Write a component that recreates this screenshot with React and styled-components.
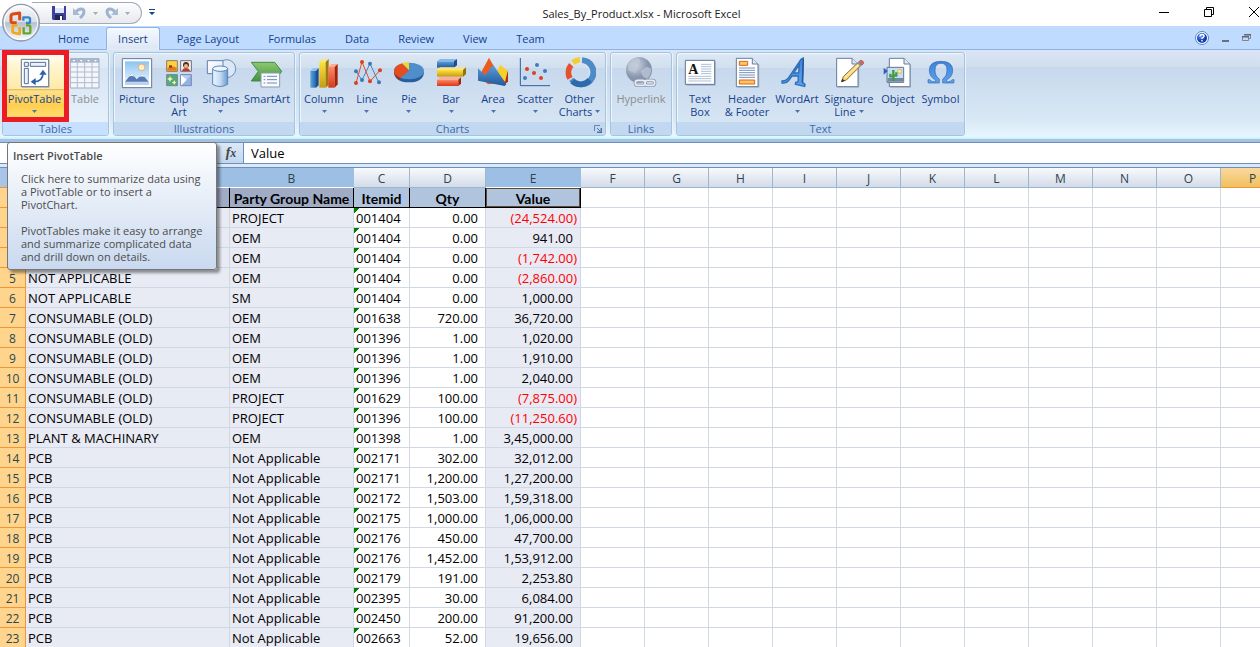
import React from "react";
import styled, { createGlobalStyle, css } from "styled-components";

const Global = createGlobalStyle`
  * { box-sizing: border-box; }
  body { margin: 0; background: #fff; overflow: hidden; }
  button, input { font: inherit; color: inherit; margin: 0; padding: 0; border: 0; background: none; }
  svg { display: block; flex: none; }
`;

const Window = styled.div`
  position: relative;
  height: 100vh;
  display: flex;
  flex-direction: column;
  overflow: hidden;
  font-family: "Open Sans", "Noto Sans", sans-serif;
  font-size: 11px;
  line-height: 13px;
  color: #15428b;
`;

/* ---------- title bar ---------- */
const TitleBar = styled.header`
  flex: none;
  display: flex;
  height: 26px;
  background: #fff;
  padding-left: 32px;
`;
const OfficeButton = styled.button`
  position: absolute;
  left: 1px;
  top: 2px;
  width: 40px;
  height: 40px;
  z-index: 2;
`;
const QuickAccess = styled.div`
  display: flex;
  align-items: center;
  width: 110px;
  height: 22px;
  margin-top: 2px;
  padding-left: 20px;
  gap: 7px;
  border: 1px solid #a5abb5;
  border-left: 0;
  border-radius: 0 12px 12px 0;
  background: linear-gradient(#fdfdfe, #e6e9ee);
`;
const IconButton = styled.button`
  display: flex;
  align-items: center;
  justify-content: center;
`;
const Customize = styled(IconButton)`
  width: 20px;
  height: 24px;
`;
const Title = styled.h1`
  flex: 1;
  margin: 0;
  padding-right: 20px;
  text-align: center;
  font-size: 11px;
  font-weight: 400;
  line-height: 27px;
  color: #1a1a1a;
`;
const WindowControls = styled.div`
  display: flex;
  width: 119px;
  overflow: hidden;
`;
const ControlButton = styled(IconButton)`
  flex: none;
  width: 45px;
  height: 24px;
`;

/* ---------- tabs ---------- */
const TabBar = styled.nav`
  flex: none;
  display: flex;
  align-items: flex-end;
  gap: 5px;
  height: 24px;
  padding-left: 46px;
  background: #bfdbff;
  border-bottom: 1px solid #8db2e3;
`;
const Tab = styled.button`
  height: 22px;
  padding: 0 11px;
  font-size: 11px;
  border: 1px solid transparent;
  border-bottom: 0;
  border-radius: 3px 3px 0 0;
  ${(p) => p.$active && css`
    height: 23px;
    margin-bottom: -1px;
    padding-bottom: 2px;
    background: linear-gradient(#f5f9ff, #dbe6f4);
    border-color: #8db2e3;
    box-shadow: 0 0 2px #fff inset;
  `}
`;
const TabTools = styled.div`
  display: flex;
  align-items: center;
  gap: 13px;
  height: 23px;
  margin-left: auto;
  padding-right: 9px;
`;

/* ---------- ribbon ---------- */
const Ribbon = styled.section`
  flex: none;
  display: flex;
  gap: 4px;
  height: 89px;
  padding: 2px 2px 3px;
  background: linear-gradient(#dbe6f4 0, #cfdded 17px, #c7d8ed 17px, #d8e8f5 70px, #e7f6ff 87px, #c0f7fe 88px);
`;
const Group = styled.div`
  display: flex;
  flex-direction: column;
  border: 1px solid #a5c4e0;
  border-radius: 3px;
  box-shadow: 1px 1px 0 #eef6fd inset, 1px 0 0 #eaf3fc;
  background: ${(p) => (p.$hot ? "linear-gradient(#e6effa 0, #dde9f6 15px, #d6e4f4 15px, #eaf4fd)" : "linear-gradient(#dee8f5 0, #d1dfee 15px, #c7d8ed 15px, #d9e8f5)")};
`;
const GroupBody = styled.div`
  flex: 1;
  display: flex;
  padding: 2px;
`;
const GroupLabel = styled.div`
  display: grid;
  grid-template-columns: 14px 1fr 14px;
  align-items: center;
  height: 14px;
  text-align: center;
  line-height: 13px;
  color: #3e6aaa;
  background: ${(p) => (p.$hot ? "#c8e0ff" : "#c2d8f1")};
  border-radius: 0 0 3px 3px;
`;
const LabelText = styled.span`
  grid-column: 2;
`;
const Tool = styled.button`
  display: flex;
  flex-direction: column;
  align-items: center;
  gap: 3px;
  width: ${(p) => p.$w}px;
  height: 65px;
  padding-top: 2px;
  white-space: nowrap;
  line-height: 13px;
  color: ${(p) => (p.disabled ? "#8d8d8d" : "#15428b")};
  ${(p) => p.$hot && css`
    border-radius: 3px;
    background: linear-gradient(#fffdf0 0, #fff3c9 14px, #ffe9a5 34px, #d9b566 34px, #ffe08a 36px, #ffcf4d 50px, #ffe07c 65px);
  `}
`;
const ToolText = styled.span`
  display: flex;
  flex-direction: column;
  align-items: center;
`;
const Line = styled.span`
  display: flex;
  align-items: center;
  gap: 3px;
  height: 13px;
`;
const Highlight = styled.div`
  position: absolute;
  left: 2px;
  top: 50px;
  width: 67px;
  height: 72px;
  border: 5px solid #ed1c24;
  pointer-events: none;
`;

/* ---------- formula bar ---------- */
const FormulaBar = styled.div`
  flex: none;
  display: flex;
  height: 29px;
  border-top: 3px solid #a9c1e0;
  border-bottom: 4px solid #dce8f7;
  background: #fff;
`;
const NameBox = styled.input`
  width: 216px;
  height: 22px;
  padding-left: 6px;
  border: solid #6b90bd;
  border-width: 1px 0;
`;
const FxButton = styled.button`
  width: 28px;
  height: 22px;
  padding-left: 3px;
  border: 1px solid #6b90bd;
  border-left: 0;
  background: linear-gradient(#dce8f7, #c3d6ee);
  font: italic bold 14px/18px "Liberation Serif", serif;
  color: #444;
  small { font-size: 12px; }
`;
const FormulaInput = styled.input`
  flex: 1;
  min-width: 0;
  height: 22px;
  padding-left: 7px;
  border: solid #6b90bd;
  border-width: 1px 0;
  font-size: 13px;
  color: #000;
`;

/* ---------- sheet ---------- */
const SheetArea = styled.main`
  flex: 1;
  min-height: 0;
  overflow: hidden;
  border-top: 1px solid #6b90bd;
  margin-top: -1px;
`;
const Sheet = styled.table`
  width: 1285px;
  table-layout: fixed;
  border-collapse: separate;
  border-spacing: 0;
  font-size: 13px;
  line-height: 17px;
  color: #000;
  th, td { height: 20px; padding: 2px 0 0; white-space: nowrap; overflow: hidden; }
`;
const colTones = {
  plain: css`background: linear-gradient(#f8fafc, #d3dbe9); border-color: #9eb6ce;`,
  selected: css`background: #9ebfe4; border-color: #9ebfe4; border-bottom-color: #fff;`,
  current: css`background: linear-gradient(#f9d99f, #f1c05f); border-color: #f29536;`,
};
const ColHead = styled.th`
  font-size: 12px;
  font-weight: 400;
  color: #2b454f;
  border: 0 solid;
  border-right-width: 1px;
  border-bottom-width: 1px;
  ${(p) => colTones[p.$tone]}
`;
const Corner = styled.th`
  background: #a9c4e9;
  border-right: 1px solid #9eb6ce;
  border-bottom: 1px solid #f29536;
`;
const RowHead = styled.th`
  font-size: 12px;
  font-weight: 400;
  text-align: center;
  color: #2b454f;
  background: #ffd58d;
  border-right: 1px solid #f29536;
  border-bottom: 1px solid #f29536;
`;
const Cell = styled.td`
  border-right: 1px solid #d0d7e5;
  border-bottom: 1px solid #d0d7e5;
  text-align: ${(p) => (p.$num ? "right" : "left")};
  color: ${(p) => (p.$neg ? "#f00" : "#000")};
  background: ${(p) => (p.$sel ? "#e8eaf4" : p.$flag ? "linear-gradient(135deg, #008000 4px, #fff 4px)" : "#fff")};
  && { padding: 2px ${(p) => (p.$neg ? 3 : p.$num ? 7 : 0)}px 0 2px; }
`;
const FieldName = styled.th`
  font-family: Lato, sans-serif;
  font-size: 14px;
  font-weight: 700;
  text-align: center;
  border-right: 1px solid #000;
  border-bottom: 1px solid #000;
  background: ${(p) => (p.$sel ? "#a0abc6" : "#b0c4de")};
  ${(p) => p.$active && css`box-shadow: 0 0 0 1px #5b4a3a inset;`}
`;

/* ---------- tooltip ---------- */
const Tip = styled.aside`
  position: absolute;
  left: 7px;
  top: 142px;
  width: 210px;
  padding: 6px 5px;
  border: 1px solid #767676;
  border-radius: 3px;
  background: linear-gradient(#fff, #c9d9ef);
  box-shadow: 3px 3px 3px rgba(0, 0, 0, 0.4);
  color: #4c4c4c;
`;
const TipTitle = styled.h2`
  margin: 0 0 10px;
  font-size: 11px;
  line-height: 13px;
  font-weight: 600;
`;
const TipText = styled.p`
  margin: 0 0 13px;
  padding-left: 8px;
  white-space: pre-line;
  &:last-child { margin: 0; }
`;

/* ---------- drawings ---------- */
const Caret = ({ color = "#4f74ad" }) => (
  <svg width="5" height="3" viewBox="0 0 5 3"><path d="M0 0h5L2.5 3z" fill={color} /></svg>
);

const Defs = () => (
  <svg width="0" height="0" style={{ position: "absolute" }} aria-hidden="true">
    <defs>
      <linearGradient id="blue"><stop offset="0" stopColor="#5fa6df" /><stop offset="1" stopColor="#2464a8" /></linearGradient>
      <linearGradient id="blueV" x2="0" y2="1"><stop offset="0" stopColor="#5b9edb" /><stop offset="1" stopColor="#23589b" /></linearGradient>
      <linearGradient id="letter" x2="0" y2="1"><stop offset="0" stopColor="#3f83d8" /><stop offset="1" stopColor="#5ba3ec" /></linearGradient>
      <linearGradient id="gold" x2="0" y2="1"><stop offset="0" stopColor="#ffe23c" /><stop offset="1" stopColor="#c69a12" /></linearGradient>
      <linearGradient id="red" x2="0" y2="1"><stop offset="0" stopColor="#ff8a66" /><stop offset="1" stopColor="#d93616" /></linearGradient>
      <linearGradient id="paper" x2="1" y2="1"><stop offset="0" stopColor="#fff" /><stop offset="1" stopColor="#dfe8f5" /></linearGradient>
      <linearGradient id="green" x2="0" y2="1"><stop offset="0" stopColor="#8fc871" /><stop offset="1" stopColor="#3f9440" /></linearGradient>
      <linearGradient id="cyl"><stop offset="0" stopColor="#eef5fd" /><stop offset="0.5" stopColor="#c5dbf3" /><stop offset="1" stopColor="#6c99ce" /></linearGradient>
      <linearGradient id="sky" x2="0" y2="1"><stop offset="0" stopColor="#8cc4f3" /><stop offset="1" stopColor="#e4f3fe" /></linearGradient>
      <radialGradient id="grey" cx="0.35" cy="0.3"><stop offset="0" stopColor="#d3dae5" /><stop offset="1" stopColor="#8694ad" /></radialGradient>
      <radialGradient id="help" cx="0.4" cy="0.3"><stop offset="0" stopColor="#69a0f5" /><stop offset="1" stopColor="#0b3bb5" /></radialGradient>
      <linearGradient id="orb" x2="0" y2="1"><stop offset="0" stopColor="#fbfcfe" /><stop offset="0.48" stopColor="#d9dfe8" /><stop offset="0.5" stopColor="#b4c0d2" /><stop offset="1" stopColor="#fbfdff" /></linearGradient>
    </defs>
  </svg>
);

const Art = ({ x, y = 36, children }) => (
  <svg width="32" height="32" viewBox={`${x} ${y} 96 96`} aria-hidden="true">{children}</svg>
);

const icons = {
  pivot: (
    <Art x={54} y={168}>
      <path d="M63 177h83v84H63z" fill="#8b9bb0" opacity=".4" />
      <path d="M61 175h82v82H61z" fill="#fff" stroke="#5d7697" strokeWidth="3" />
      <path d="M70 184h12v12H70zM88 184h46v12H88zM70 202h12v46H70z" fill="#eaf1fa" stroke="#54709a" strokeWidth="3" />
      <path d="M98 242c18 0 28-10 28-27" fill="none" stroke="#2f5fa6" strokeWidth="5" />
      <path d="M126 206l11 15h-22zM89 242l15-11v22z" fill="#2f5fa6" />
    </Art>
  ),
  table: (
    <Art x={207} y={168}>
      <path d="M211 173h86v88h-86z" fill="#f3f6fa" stroke="#9fadc3" strokeWidth="3" />
      <path d="M211 173h86v12h-86z" fill="#a5b3c7" />
      <path d="M211 198h86M211 213h86M211 229h86M211 245h86M232 173v88M254 173v88M276 173v88" stroke="#b0bdd0" strokeWidth="3" />
      <path d="M217 177h9l-4 5zM239 177h9l-4 5zM261 177h9l-4 5zM282 177h9l-4 5z" fill="#fff" />
    </Art>
  ),
  picture: (
    <Art x={363} y={168}>
      <path d="M367 173h88v87h-88z" fill="#fff" stroke="#60779a" strokeWidth="3" />
      <path d="M375 181h72v64h-72z" fill="url(#sky)" />
      <circle cx="425" cy="199" r="10" fill="#fff0d0" stroke="#f1a95e" strokeWidth="3" />
      <path d="M375 243l20-26 15 18 17-15 20 24z" fill="#5479b3" />
      <path d="M387 227l8-10 8 10-8-3zM418 228l9-8 8 9-8-3z" fill="#fff" />
      <path d="M375 242h72v10h-72z" fill="#bcd2ed" />
    </Art>
  ),
  clip: (
    <Art x={489} y={168}>
      <path d="M500 179h32v32h-32z" fill="#ffd23d" stroke="#8c7b66" strokeWidth="3" />
      <path d="M502 201l16-5 12 4v9h-28z" fill="#e47a18" /><path d="M507 193h9v7h-9z" fill="#8b3b14" />
      <path d="M542 179h32v32h-32z" fill="#f4f1ef" stroke="#6f6f78" strokeWidth="3" />
      <circle cx="558" cy="192" r="9" fill="#4e2c22" /><circle cx="558" cy="195" r="6" fill="#efb48c" /><path d="M546 210q2-9 12-9t12 9z" fill="#c13c2b" />
      <path d="M500 221h32v33h-32z" fill="#54a883" stroke="#6b8b80" strokeWidth="3" />
      <path d="M510 225l3 6 6 3-6 3-3 6-3-6-6-3 6-3zM523 237l2 5 5 3-5 2-2 5-3-5-5-2 5-3z" fill="#f7f3a0" />
      <path d="M542 221h32v33h-32z" fill="#b9cdf2" stroke="#7386ad" strokeWidth="3" />
      <path d="M543 222l19 16-19 15z" fill="#fff" /><path d="M573 222v31h-28z" fill="#7c9de0" opacity=".6" />
    </Art>
  ),
  shapes: (
    <Art x={615} y={168}>
      <circle cx="680" cy="203" r="27" fill="#dce8f6" stroke="#6d8fbd" strokeWidth="3" />
      <path d="M622 179h47v39h-47z" fill="url(#paper)" stroke="#5d80b0" strokeWidth="3" />
      <path d="M638 203v47q22 13 45 0v-47z" fill="url(#cyl)" stroke="#5c85ba" strokeWidth="3" />
      <ellipse cx="660.500" cy="203" rx="22.500" ry="8" fill="#edf5fd" stroke="#5c85ba" strokeWidth="3" />
    </Art>
  ),
  smart: (
    <Art x={753} y={168}>
      <path d="M754 184h70l21 27-21 29h-70l21-29z" fill="url(#green)" stroke="#458747" strokeWidth="3" />
      <path d="M783 216h56v42h-56z" fill="#f8fafd" stroke="#8b9ab0" strokeWidth="3" />
      <path d="M791 226h5M801 226h30M791 236h5M801 236h30M791 246h5M801 246h30" stroke="#7088b0" strokeWidth="3" />
    </Art>
  ),
  column: (
    <Art x={57}>
      <path d="M64 78h17v50H64z" fill="url(#blue)" /><path d="M64 78l8-9h17l-8 9z" fill="#8dc3ec" /><path d="M81 78l8-9v52l-8 7z" fill="#1c4f8b" />
      <path d="M91 51h19v77H91z" fill="url(#gold)" /><path d="M91 51l9-9h19l-9 9z" fill="#f8e483" /><path d="M110 51l9-9v77l-9 9z" fill="#9a7b0b" />
      <path d="M118 66h19v62h-19z" fill="url(#red)" /><path d="M118 66l9-9h19l-9 9z" fill="#ffab90" /><path d="M137 66l9-9v61l-9 10z" fill="#a62105" />
    </Art>
  ),
  line: (
    <Art x={186}>
      <path d="M201 79l18 26 24-49 26 56" fill="none" stroke="#4983bd" strokeWidth="3" />
      <path d="M201 114l18-63 24 58 30-33" fill="none" stroke="#d8502f" strokeWidth="3" />
      <g fill="#3c78b5"><circle cx="201" cy="79" r="6" /><circle cx="219" cy="105" r="6" /><circle cx="243" cy="56" r="6" /><circle cx="270" cy="112" r="6" /></g>
      <g fill="#d9421d"><circle cx="201" cy="114" r="6" /><circle cx="219" cy="51" r="6" /><circle cx="243" cy="109" r="6" /><circle cx="273" cy="76" r="6" /></g>
    </Art>
  ),
  pie: (
    <Art x={312}>
      <path d="M315 80q0 31 45 32 45-1 45-32z" fill="#285e9f" />
      <ellipse cx="360" cy="78" rx="45" ry="25" fill="#4d8ecb" />
      <path d="M360 78l-27 21q-18-8-18-21 0-15 24-23z" fill="#e34d20" /><path d="M315 79q0 17 19 27v-7q-17-8-19-20z" fill="#a62c0b" />
      <path d="M360 75l-21-20q10-3 21-3z" fill="#f8d32c" />
    </Art>
  ),
  bar: (
    <Art x={438}>
      <path d="M444 49h51v19h-51z" fill="url(#blueV)" /><path d="M444 49l9-7h51l-9 7z" fill="#86b9e5" /><path d="M495 49l9-7v19l-9 7z" fill="#1c4f8b" />
      <path d="M444 75h78v20h-78z" fill="url(#gold)" /><path d="M444 75l9-8h78l-9 8z" fill="#f8e483" /><path d="M522 75l9-8v20l-9 8z" fill="#8e720c" />
      <path d="M444 104h64v19h-64z" fill="url(#red)" /><path d="M444 104l9-7h63l-8 7z" fill="#ffab90" /><path d="M508 104l8-7v19l-8 7z" fill="#a62105" />
    </Art>
  ),
  area: (
    <Art x={564}>
      <path d="M571 92l29-54 34 60 23-20v34l-60 6z" fill="#ea5c20" /><path d="M657 76v33l-12 12z" fill="#a93210" />
      <path d="M622 80l12-20 22 17-8 33z" fill="#f6cf2c" />
      <path d="M567 70l21 21 25-31 39 58-5 5-80-16z" fill="url(#blueV)" />
    </Art>
  ),
  scatter: (
    <Art x={690}>
      <path d="M694 39v83h89" fill="none" stroke="#315f9b" strokeWidth="3" />
      <g fill="#3f7cba"><circle cx="744" cy="60" r="6" /><circle cx="768" cy="78" r="6" /><circle cx="708" cy="99" r="6" /></g>
      <g fill="#d9421d"><circle cx="714" cy="72" r="6" /><circle cx="735" cy="84" r="6" /><circle cx="756" cy="99" r="6" /></g>
    </Art>
  ),
  other: (
    <Art x={822}>
      <g fill="none" strokeWidth="18">
        <path d="M876 46a36 36 0 1 1-31 57" stroke="#4d8bc6" /><path d="M899 105a36 36 0 0 1-52 3" stroke="#2f6bac" />
        <path d="M840 100a36 36 0 0 1 4-40" stroke="#e2522c" /><path d="M849 53a36 36 0 0 1 21-8" stroke="#f0ce38" />
      </g>
      <circle cx="872" cy="81" r="27" fill="none" stroke="#eef3fa" strokeWidth="2" opacity=".7" />
    </Art>
  ),
  link: (
    <Art x={60}>
      <circle cx="102" cy="75" r="39" fill="url(#grey)" />
      <path d="M70 56q12-17 30-17l7 11-15 12 8 9-10 14-20-9zM107 78l19-13 12 6q1 18-12 31l-13-8z" fill="#bdc7d6" opacity=".75" />
      <g fill="none" stroke="#8b98ae" strokeWidth="10"><rect x="91" y="106" width="29" height="15" rx="7" /><rect x="120" y="106" width="29" height="15" rx="7" /></g>
      <g fill="none" stroke="#e8edf4" strokeWidth="5"><rect x="91" y="106" width="29" height="15" rx="7" /><rect x="120" y="106" width="29" height="15" rx="7" /></g>
    </Art>
  ),
  textbox: (
    <Art x={237}>
      <path d="M244 49h88v73h-88z" fill="#7d8ba1" opacity=".5" /><path d="M241 46h88v72h-88z" fill="#fff" stroke="#5f7593" strokeWidth="3" />
      <text x="250" y="88" fontFamily="Liberation Serif, serif" fontWeight="700" fontSize="42" fill="#111">A</text>
      <path d="M288 58h31M288 65h31M288 72h31M288 79h31M288 86h31M250 94h69M250 101h69M250 108h69" stroke="#9eb1cf" strokeWidth="2.500" />
    </Art>
  ),
  header: (
    <Art x={378}>
      <path d="M397 43h49l17 18v67h-66z" fill="#7d8ba1" opacity=".4" /><path d="M394 40h48l17 17v68h-65z" fill="#fff" stroke="#667c9d" strokeWidth="3" /><path d="M442 40v17h17" fill="#dfe7f2" stroke="#667c9d" strokeWidth="3" />
      <path d="M403 49h25v12h-25z" fill="#ffc36b" stroke="#d2690f" strokeWidth="3" /><path d="M403 105h46v12h-46z" fill="#ffc36b" stroke="#d2690f" strokeWidth="3" />
      <path d="M402 69h48M402 76h48M402 83h48M402 90h48M402 97h48" stroke="#7791bd" strokeWidth="3" />
    </Art>
  ),
  wordart: (
    <Art x={528}>
      <path d="M531 108q13 1 22-13l35-52 7-4-2 74 7 5-1 6-28-6 1-6 7-1 1-18h-19l-10 14q-6 9-20 7zM566 84h15l2-25z" fill="url(#letter)" stroke="#2e6eb8" strokeWidth="4" />
      <path d="M595 43l-3 70" stroke="#23559c" strokeWidth="4" fill="none" />
    </Art>
  ),
  sign: (
    <Art x={684}>
      <path d="M697 43h46l20 18v67h-66z" fill="#7d8ba1" opacity=".4" /><path d="M695 40h46l18 17v68h-64z" fill="#fff" stroke="#667c9d" strokeWidth="3" /><path d="M741 40v17h18" fill="#dfe7f2" stroke="#667c9d" strokeWidth="3" />
      <path d="M710 110l5-15 45-43 8 9-44 44z" fill="#ffd979" stroke="#7d6a3c" strokeWidth="3" /><path d="M720 97l42-40" stroke="#fff2c0" strokeWidth="3" />
      <path d="M762 50l5-4q8 0 9 9l-5 5z" fill="#d86a5e" stroke="#8a4537" strokeWidth="2" /><path d="M758 53l10 10" stroke="#8395aa" strokeWidth="5" /><path d="M708 112l4-11 8 6z" fill="#333" />
    </Art>
  ),
  object: (
    <Art x={828}>
      <path d="M853 43h44l18 18v67h-62z" fill="#7d8ba1" opacity=".4" /><path d="M850 40h44l18 17v68h-62z" fill="#fff" stroke="#667c9d" strokeWidth="3" /><path d="M894 40v17h18" fill="#dfe7f2" stroke="#667c9d" strokeWidth="3" />
      <path d="M843 67h50v45h-50z" fill="#c6def4" stroke="#60758f" strokeWidth="3" /><path d="M845 99h47v11h-47z" fill="#718aa2" />
      <circle cx="881" cy="79" r="6" fill="#ffe9a0" stroke="#d6aa3d" strokeWidth="2" />
      <path d="M862 108V75M853 86v8h9M871 82v10h-8" fill="none" stroke="#459a48" strokeWidth="7" /><path d="M833 68l12 10-12 11z" fill="#255fc0" />
    </Art>
  ),
  symbol: (
    <Art x={957}>
      <path d="M966 113v-9h5q4 6 12 6h6v-5q-19-9-19-29 0-27 35-27t35 27q0 20-19 29v5h6q8 0 12-6h5v9l-2 1h-32v-12q13-8 13-27 0-20-18-20t-18 20q0 19 13 27v12h-32z" fill="url(#letter)" stroke="#3168b5" strokeWidth="2" />
    </Art>
  ),
};

const OfficeOrb = () => (
  <svg width="40" height="40" viewBox="0 0 120 120" aria-hidden="true">
    <circle cx="60" cy="62" r="55" fill="url(#orb)" stroke="#8f98a6" strokeWidth="4" />
    <circle cx="60" cy="62" r="50" fill="none" stroke="#fff" strokeWidth="3" />
    <g fill="none" strokeWidth="9" strokeLinejoin="round">
      <path d="M50 51v-7h-10q-3 0-3 4v10q0 3 4 3h9M50 32h9v24" stroke="none" />
      <path d="M56 55V33l-20 3q-6 1-6 7v14q0 5 5 5h12" stroke="#df4a13" />
      <path d="M67 56V46h14q6 0 6 5v8q0 4-4 4h-8" stroke="#3387c9" strokeWidth="7" />
      <path d="M49 70H40q-5 0-5 5v12q0 6 6 6l15 3V75" stroke="#f2a81a" strokeWidth="8" />
      <path d="M75 70h8q5 0 5 5v15q0 4-4 4H68V76" stroke="#69a52b" strokeWidth="7" />
    </g>
  </svg>
);
const SaveIcon = () => (
  <svg width="14" height="14" viewBox="0 0 14 14"><path d="M0 0h14v14H1l-1-1z" fill="#3f3f9f" /><path d="M3 0h9v7H3z" fill="#dce7fb" /><path d="M3 0h9v2H3z" fill="#fff" /><path d="M3 9h8v5H3z" fill="#20264f" /><path d="M8 10h2v4H8z" fill="#fff" /></svg>
);
const UndoIcon = ({ flip }) => (
  <svg width="13" height="12" viewBox="0 0 13 12"><g transform={flip ? "translate(13 0) scale(-1 1)" : undefined}><path d="M3 5c3-4 8-4 8 0 0 3-2 4-4 6" fill="none" stroke="#9fb3d0" strokeWidth="3" /><path d="M0 1v7h7z" fill="#a9bad4" /></g></svg>
);

/* ---------- data ---------- */
const groups = [
  { name: "Tables", hot: true, tools: [["pivot", 59, ["PivotTable"], "below", "hot"], ["table", 42, ["Table"], "", "off"]] },
  { name: "Illustrations", tools: [["picture", 42, ["Picture"]], ["clip", 42, ["Clip", "Art"]], ["shapes", 42, ["Shapes"], "below"], ["smart", 50, ["SmartArt"]]] },
  { name: "Charts", launcher: true, tools: [["column", 44, ["Column"], "below"], ["line", 42, ["Line"], "below"], ["pie", 42, ["Pie"], "below"], ["bar", 42, ["Bar"], "below"], ["area", 42, ["Area"], "below"], ["scatter", 42, ["Scatter"], "below"], ["other", 47, ["Other", "Charts"], "inline"]] },
  { name: "Links", tools: [["link", 56, ["Hyperlink"], "", "off"]] },
  { name: "Text", tools: [["textbox", 42, ["Text", "Box"]], ["header", 52, ["Header", "& Footer"]], ["wordart", 48, ["WordArt"], "below"], ["sign", 56, ["Signature", "Line"], "inline"], ["object", 42, ["Object"]], ["symbol", 43, ["Symbol"]]] },
];
const tabs = ["Home", "Insert", "Page Layout", "Formulas", "Data", "Review", "View", "Team"];
const widths = [26, 204, 124, 56, 76, 95, ...Array(11).fill(64)];
const letters = "ABCDEFGHIJKLMNOP".split("");
const na = "NOT APPLICABLE", co = "CONSUMABLE (OLD)", un = "Not Applicable";
const rows = [
  ["", "PROJECT", "001404", "0.00", "(24,524.00)"],
  ["", "OEM", "001404", "0.00", "941.00"],
  ["", "OEM", "001404", "0.00", "(1,742.00)"],
  [na, "OEM", "001404", "0.00", "(2,860.00)"],
  [na, "SM", "001404", "0.00", "1,000.00"],
  [co, "OEM", "001638", "720.00", "36,720.00"],
  [co, "OEM", "001396", "1.00", "1,020.00"],
  [co, "OEM", "001396", "1.00", "1,910.00"],
  [co, "OEM", "001396", "1.00", "2,040.00"],
  [co, "PROJECT", "001629", "100.00", "(7,875.00)"],
  [co, "PROJECT", "001396", "100.00", "(11,250.60)"],
  ["PLANT & MACHINARY", "OEM", "001398", "1.00", "3,45,000.00"],
  ["PCB", un, "002171", "302.00", "32,012.00"],
  ["PCB", un, "002171", "1,200.00", "1,27,200.00"],
  ["PCB", un, "002172", "1,503.00", "1,59,318.00"],
  ["PCB", un, "002175", "1,000.00", "1,06,000.00"],
  ["PCB", un, "002176", "450.00", "47,700.00"],
  ["PCB", un, "002176", "1,452.00", "1,53,912.00"],
  ["PCB", un, "002179", "191.00", "2,253.80"],
  ["PCB", un, "002395", "30.00", "6,084.00"],
  ["PCB", un, "002450", "200.00", "91,200.00"],
  ["PCB", un, "002663", "52.00", "19,656.00"],
];
const fields = ["", "Party Group Name", "Itemid", "Qty", "Value"];
const firstNumbered = 5;
const blanks = letters.slice(5);
const toneOf = (l) => ("ABE".includes(l) ? "selected" : l === "P" ? "current" : "plain");

function RibbonTool({ tool: [icon, width, lines, caret, state] }) {
  const last = lines.length - 1;
  return (
    <Tool $w={width} $hot={state === "hot"} disabled={state === "off"}>
      {icons[icon]}
      <ToolText>
        {lines.map((t, i) => <Line key={t}>{t}{caret === "inline" && i === last && <Caret />}</Line>)}
        {caret === "below" && <Line><Caret /></Line>}
      </ToolText>
    </Tool>
  );
}

export default function App() {
  return (
    <Window>
      <Global />
      <Defs />
      <TitleBar>
        <OfficeButton aria-label="Office"><OfficeOrb /></OfficeButton>
        <QuickAccess>
          <IconButton aria-label="Save"><SaveIcon /></IconButton>
          <IconButton aria-label="Undo"><UndoIcon /></IconButton>
          <IconButton aria-label="Undo list"><Caret color="#a8acb3" /></IconButton>
          <IconButton aria-label="Redo"><UndoIcon flip /></IconButton>
          <IconButton aria-label="Redo list"><Caret color="#a8acb3" /></IconButton>
        </QuickAccess>
        <Customize aria-label="Customize toolbar">
          <svg width="6" height="6" viewBox="0 0 6 6"><path d="M0 0h6v1H0zM0 3h6L3 6z" fill="#15428b" /></svg>
        </Customize>
        <Title>Sales_By_Product.xlsx - Microsoft Excel</Title>
        <WindowControls>
          <ControlButton aria-label="Minimize"><svg width="10" height="10" viewBox="0 0 10 10"><path d="M0 5.500h10" stroke="#000" /></svg></ControlButton>
          <ControlButton aria-label="Restore"><svg width="10" height="10" viewBox="0 0 10 10"><path d="M.5 2.500h7v7h-7zM2.500 2.500v-2h7v7h-2" fill="none" stroke="#000" /></svg></ControlButton>
          <ControlButton aria-label="Close"><svg width="10" height="10" viewBox="0 0 10 10"><path d="M0 0l10 10M10 0L0 10" stroke="#000" /></svg></ControlButton>
        </WindowControls>
      </TitleBar>
      <TabBar>
        {tabs.map((t) => <Tab key={t} $active={t === "Insert"}>{t}</Tab>)}
        <TabTools>
          <IconButton aria-label="Help">
            <svg width="14" height="14" viewBox="0 0 14 14"><circle cx="7" cy="7" r="6.500" fill="#fff" stroke="#5c83bb" /><circle cx="7" cy="7" r="5" fill="url(#help)" /><path d="M5 5.500q0-2 2-2t2 1.700q0 1-2 2V8" fill="none" stroke="#fff" strokeWidth="1.400" /><path d="M6.300 9h1.400v1.400H6.300z" fill="#fff" /></svg>
          </IconButton>
          <IconButton aria-label="Minimize workbook"><svg width="7" height="9" viewBox="0 0 7 9"><path d="M0 7h7v2H0z" fill="#6a7078" /></svg></IconButton>
          <IconButton aria-label="Restore workbook"><svg width="9" height="7" viewBox="0 0 9 7"><path d="M.5 2.500h6v4h-6zM2 .5h6.500v4H7" fill="none" stroke="#7f858d" /><path d="M2 0h7v1.500H2zM0 2h7v1.500H0z" fill="#62676e" /></svg></IconButton>
        </TabTools>
      </TabBar>
      <Ribbon>
        {groups.map((g) => (
          <Group key={g.name} $hot={g.hot}>
            <GroupBody>{g.tools.map((t) => <RibbonTool key={t[0]} tool={t} />)}</GroupBody>
            <GroupLabel $hot={g.hot}>
              <LabelText>{g.name}</LabelText>
              {g.launcher && (
                <IconButton aria-label="Chart options"><svg width="8" height="8" viewBox="0 0 8 8"><path d="M.5 6V.5H6" fill="none" stroke="#6685b0" /><path d="M3 3l3 3" stroke="#5573a0" /><path d="M7.500 3v4.500H3" fill="none" stroke="#5573a0" strokeWidth="2" /></svg></IconButton>
              )}
            </GroupLabel>
          </Group>
        ))}
      </Ribbon>
      <FormulaBar>
        <NameBox aria-label="Name box" />
        <FxButton aria-label="Insert function">f<small>x</small></FxButton>
        <FormulaInput aria-label="Formula" defaultValue="Value" />
      </FormulaBar>
      <SheetArea>
        <Sheet>
          <colgroup>{widths.map((w, i) => <col key={i} width={w} />)}</colgroup>
          <thead>
            <tr>
              <Corner />
              {letters.map((l) => <ColHead key={l} $tone={toneOf(l)}>{l === "A" ? "" : l}</ColHead>)}
            </tr>
          </thead>
          <tbody>
            <tr>
              <RowHead />
              {fields.map((f, i) => <FieldName key={i} $sel={i < 2} $active={i === 4}>{f}</FieldName>)}
              {blanks.map((l) => <Cell key={l} />)}
            </tr>
            {rows.map(([a, b, c, d, e], i) => (
              <tr key={i}>
                <RowHead>{i + 2 >= firstNumbered ? i + 2 : ""}</RowHead>
                <Cell $sel>{a}</Cell>
                <Cell $sel>{b}</Cell>
                <Cell $flag>{c}</Cell>
                <Cell $num>{d}</Cell>
                <Cell $num $sel $neg={e[0] === "("}>{e}</Cell>
                {blanks.map((l) => <Cell key={l} />)}
              </tr>
            ))}
          </tbody>
        </Sheet>
      </SheetArea>
      <Highlight />
      <Tip role="tooltip">
        <TipTitle>Insert PivotTable</TipTitle>
        <TipText>{"Click here to summarize data using\na PivotTable or to insert a\nPivotChart."}</TipText>
        <TipText>{"PivotTables make it easy to arrange\nand summarize complicated data\nand drill down on details."}</TipText>
      </Tip>
    </Window>
  );
}
